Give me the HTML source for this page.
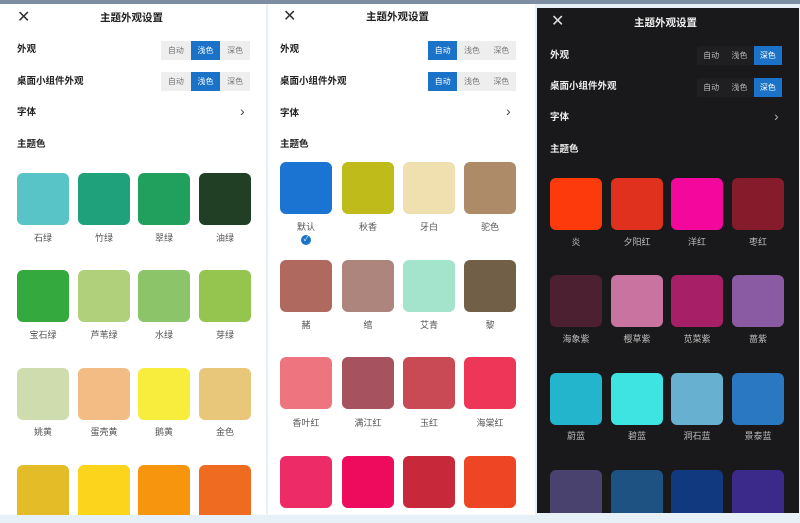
<!DOCTYPE html>
<html><head><meta charset="utf-8"><style>
*{margin:0;padding:0;box-sizing:border-box}
body{width:800px;height:523px;position:relative;overflow:hidden;background:#e8f0f7;font-family:"Liberation Sans","Noto Sans CJK SC",sans-serif}
.p{position:absolute}
.s{position:absolute;width:52px;height:52px;border-radius:6px}
.l{position:absolute;width:60px;text-align:center;font-size:9px;color:#555;line-height:12px}
.d .l{color:#bbb}
.t{position:absolute;font-size:9.5px;font-weight:bold;color:#222;line-height:12px}
.d .t{color:#eee}
.h{position:absolute;font-size:10.5px;font-weight:bold;color:#222;line-height:14px}
.d .h{color:#eee}
.seg{position:absolute;height:19px;display:flex;background:#eee;font-size:8px;color:#777}
.d .seg{background:#1f1f22;color:#bbb}
.seg span{flex:1;text-align:center;line-height:19px}
.seg .on{background:#1a73c8;color:#fff}
.x{position:absolute;font-size:16px;color:#333;line-height:16px}
.d .x{color:#ddd}
.ar{position:absolute;font-size:14px;color:#444}
.d .ar{color:#aaa}
</style></head><body>
<div class="p" style="left:0;top:0;width:800px;height:4px;background:#7d8ea2"></div>

<!-- Panel 1 -->
<div class="p" style="left:0;top:4px;width:266px;height:511px;background:#fff">
<div class="x" style="left:17px;top:6px">✕</div>
<div class="h" style="left:100px;top:7px">主题外观设置</div>
<div class="t" style="left:17px;top:40px">外观</div>
<div class="seg" style="left:161px;top:37px;width:89px"><span>自动</span><span class="on">浅色</span><span>深色</span></div>
<div class="t" style="left:17px;top:72px">桌面小组件外观</div>
<div class="seg" style="left:161px;top:68px;width:89px"><span>自动</span><span class="on">浅色</span><span>深色</span></div>
<div class="t" style="left:17px;top:103px">字体</div>
<div class="ar" style="left:240px;top:99px">›</div>
<div class="t" style="left:17px;top:135px">主题色</div>
</div>
<div class="s" style="left:17px;top:173px;background:#58c4c8"></div>
<div class="s" style="left:78px;top:173px;background:#1fa27c"></div>
<div class="s" style="left:138px;top:173px;background:#20a05c"></div>
<div class="s" style="left:199px;top:173px;background:#213f24"></div>
<div class="l" style="left:13px;top:232px">石绿</div><div class="l" style="left:74px;top:232px">竹绿</div><div class="l" style="left:134px;top:232px">翠绿</div><div class="l" style="left:195px;top:232px">油绿</div>
<div class="s" style="left:17px;top:270px;background:#34aa3e"></div>
<div class="s" style="left:78px;top:270px;background:#b0d07c"></div>
<div class="s" style="left:138px;top:270px;background:#8cc46a"></div>
<div class="s" style="left:199px;top:270px;background:#95c44f"></div>
<div class="l" style="left:13px;top:329px">宝石绿</div><div class="l" style="left:74px;top:329px">芦苇绿</div><div class="l" style="left:134px;top:329px">水绿</div><div class="l" style="left:195px;top:329px">芽绿</div>
<div class="s" style="left:17px;top:368px;background:#cfdcae"></div>
<div class="s" style="left:78px;top:368px;background:#f3bc84"></div>
<div class="s" style="left:138px;top:368px;background:#f8ec3c"></div>
<div class="s" style="left:199px;top:368px;background:#e8c77a"></div>
<div class="l" style="left:13px;top:426px">姚黄</div><div class="l" style="left:74px;top:426px">蛋壳黄</div><div class="l" style="left:134px;top:426px">鹅黄</div><div class="l" style="left:195px;top:426px">金色</div>
<div class="s" style="left:17px;top:465px;height:50px;border-radius:6px 6px 0 0;background:#e3bc28"></div>
<div class="s" style="left:78px;top:465px;height:50px;border-radius:6px 6px 0 0;background:#fcd41c"></div>
<div class="s" style="left:138px;top:465px;height:50px;border-radius:6px 6px 0 0;background:#f7950e"></div>
<div class="s" style="left:199px;top:465px;height:50px;border-radius:6px 6px 0 0;background:#ef6b22"></div>

<!-- Panel 2 -->
<div class="p" style="left:268px;top:4px;width:267px;height:511px;background:#fff">
<div class="x" style="left:15px;top:5px">✕</div>
<div class="h" style="left:98px;top:6px">主题外观设置</div>
<div class="t" style="left:12px;top:40px">外观</div>
<div class="seg" style="left:160px;top:37px;width:88px"><span class="on">自动</span><span>浅色</span><span>深色</span></div>
<div class="t" style="left:12px;top:72px">桌面小组件外观</div>
<div class="seg" style="left:160px;top:68px;width:88px"><span class="on">自动</span><span>浅色</span><span>深色</span></div>
<div class="t" style="left:12px;top:104px">字体</div>
<div class="ar" style="left:238px;top:99px">›</div>
<div class="t" style="left:12px;top:135px">主题色</div>
</div>
<div class="s" style="left:280px;top:162px;background:#1b74d2"></div>
<div class="s" style="left:342px;top:162px;background:#bfbb1a"></div>
<div class="s" style="left:403px;top:162px;background:#f0dfaf"></div>
<div class="s" style="left:464px;top:162px;background:#ad8a68"></div>
<div class="l" style="left:276px;top:221px">默认</div><div class="l" style="left:338px;top:221px">秋香</div><div class="l" style="left:399px;top:221px">牙白</div><div class="l" style="left:460px;top:221px">驼色</div>
<div class="p" style="left:301px;top:235px;width:10px;height:10px;border-radius:50%;background:#1a73c8;color:#fff;font-size:7px;line-height:10px;text-align:center">✓</div>
<div class="s" style="left:280px;top:260px;background:#b0695e"></div>
<div class="s" style="left:342px;top:260px;background:#ad857c"></div>
<div class="s" style="left:403px;top:260px;background:#a4e3cc"></div>
<div class="s" style="left:464px;top:260px;background:#725f47"></div>
<div class="l" style="left:276px;top:319px">赭</div><div class="l" style="left:338px;top:319px">绾</div><div class="l" style="left:399px;top:319px">艾青</div><div class="l" style="left:460px;top:319px">黎</div>
<div class="s" style="left:280px;top:357px;background:#ee7580"></div>
<div class="s" style="left:342px;top:357px;background:#a6525f"></div>
<div class="s" style="left:403px;top:357px;background:#c94a55"></div>
<div class="s" style="left:464px;top:357px;background:#ee3758"></div>
<div class="l" style="left:276px;top:417px">香叶红</div><div class="l" style="left:338px;top:417px">满江红</div><div class="l" style="left:399px;top:417px">玉红</div><div class="l" style="left:460px;top:417px">海棠红</div>
<div class="s" style="left:280px;top:456px;background:#ec2b67"></div>
<div class="s" style="left:342px;top:456px;background:#ee0b5d"></div>
<div class="s" style="left:403px;top:456px;background:#c7283a"></div>
<div class="s" style="left:464px;top:456px;background:#ee4525"></div>

<!-- Panel 3 dark -->
<div class="p d" style="left:537px;top:8px;width:262px;height:505px;background:#19191b">
<div class="x" style="left:14px;top:6px">✕</div>
<div class="h" style="left:97px;top:8px">主题外观设置</div>
<div class="t" style="left:13px;top:42px">外观</div>
<div class="seg" style="left:160px;top:38px;width:85px"><span>自动</span><span>浅色</span><span class="on">深色</span></div>
<div class="t" style="left:13px;top:73px">桌面小组件外观</div>
<div class="seg" style="left:160px;top:70px;width:85px"><span>自动</span><span>浅色</span><span class="on">深色</span></div>
<div class="t" style="left:13px;top:104px">字体</div>
<div class="ar" style="left:237px;top:100px">›</div>
<div class="t" style="left:13px;top:136px">主题色</div>
</div>
<div class="s" style="left:550px;top:178px;background:#fc3a0c"></div>
<div class="s" style="left:611px;top:178px;background:#e0311f"></div>
<div class="s" style="left:671px;top:178px;background:#f4079d"></div>
<div class="s" style="left:732px;top:178px;background:#861c2b"></div>
<div class="l d" style="left:546px;top:236px;color:#bbb">炎</div><div class="l" style="left:607px;top:236px;color:#bbb">夕阳红</div><div class="l" style="left:667px;top:236px;color:#bbb">洋红</div><div class="l" style="left:728px;top:236px;color:#bbb">枣红</div>
<div class="s" style="left:550px;top:275px;background:#4c1f31"></div>
<div class="s" style="left:611px;top:275px;background:#c873a0"></div>
<div class="s" style="left:671px;top:275px;background:#a71f66"></div>
<div class="s" style="left:732px;top:275px;background:#8a5ba3"></div>
<div class="l" style="left:546px;top:333px;color:#bbb">海象紫</div><div class="l" style="left:607px;top:333px;color:#bbb">樱草紫</div><div class="l" style="left:667px;top:333px;color:#bbb">苋菜紫</div><div class="l" style="left:728px;top:333px;color:#bbb">蔷紫</div>
<div class="s" style="left:550px;top:373px;background:#23b5cb"></div>
<div class="s" style="left:611px;top:373px;background:#3ee4e2"></div>
<div class="s" style="left:671px;top:373px;background:#67b0cf"></div>
<div class="s" style="left:732px;top:373px;background:#2a77c2"></div>
<div class="l" style="left:546px;top:430px;color:#bbb">蔚蓝</div><div class="l" style="left:607px;top:430px;color:#bbb">碧蓝</div><div class="l" style="left:667px;top:430px;color:#bbb">洞石蓝</div><div class="l" style="left:728px;top:430px;color:#bbb">景泰蓝</div>
<div class="s" style="left:550px;top:470px;height:43px;border-radius:6px 6px 0 0;background:#4a426e"></div>
<div class="s" style="left:611px;top:470px;height:43px;border-radius:6px 6px 0 0;background:#1e5282"></div>
<div class="s" style="left:671px;top:470px;height:43px;border-radius:6px 6px 0 0;background:#11397f"></div>
<div class="s" style="left:732px;top:470px;height:43px;border-radius:6px 6px 0 0;background:#3b2a8a"></div>
</body></html>
